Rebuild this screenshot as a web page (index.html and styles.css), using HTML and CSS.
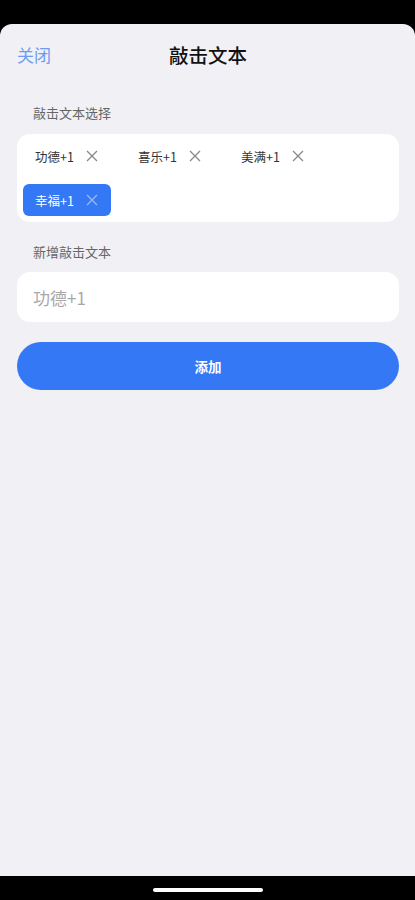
FILE: index.html
```html
<!DOCTYPE html>
<html lang="zh">
<head>
<meta charset="utf-8">
<link rel="stylesheet" href="styles.css">
</head>
<body>
<div class="screen">
  <div class="sheet">
    <header class="nav">
      <span class="close">关闭</span>
      <h1 class="title">敲击文本</h1>
    </header>
    <div class="label">敲击文本选择</div>
    <div class="card chips">
      <div class="chip"><span>功德+1</span><svg class="x" viewBox="0 0 12 12"><path d="M1 1L11 11M11 1L1 11"/></svg></div>
      <div class="chip"><span>喜乐+1</span><svg class="x" viewBox="0 0 12 12"><path d="M1 1L11 11M11 1L1 11"/></svg></div>
      <div class="chip"><span>美满+1</span><svg class="x" viewBox="0 0 12 12"><path d="M1 1L11 11M11 1L1 11"/></svg></div>
      <div class="chip active"><span>幸福+1</span><svg class="x" viewBox="0 0 12 12"><path d="M1 1L11 11M11 1L1 11"/></svg></div>
    </div>
    <div class="label label2">新增敲击文本</div>
    <div class="card input"><span class="placeholder">功德+1</span></div>
    <button class="add">添加</button>
  </div>
  <div class="home"><div class="bar"></div></div>
</div>
</body>
</html>
```
FILE: styles.css
```css
* { box-sizing: border-box; }
html, body { margin: 0; padding: 0; background: #000; }
body {
  font-family: "Noto Sans CJK SC", "Noto Sans", sans-serif;
  width: 415px;
  height: 900px;
  overflow: hidden;
}
.screen {
  height: 900px;
  display: flex;
  flex-direction: column;
  padding-top: 24px;
}
.sheet {
  flex: 1;
  background: #f1f0f5;
  border-radius: 12px 12px 0 0;
  padding: 0 16px 0 17px;
  display: flex;
  flex-direction: column;
}
.nav {
  height: 62px;
  display: flex;
  align-items: center;
  position: relative;
  padding-bottom: 1px;
}
.close {
  color: #6d9cf0;
  font-size: 17px;
  line-height: 20px;
}
.title {
  position: absolute;
  left: 0; right: 0;
  text-align: center;
  margin: 0;
  font-size: 19.5px;
  font-weight: 500;
  color: #111;
  line-height: 24px;
  pointer-events: none;
}
.label {
  color: #666;
  font-size: 13px;
  line-height: 18px;
  padding-left: 16px;
  margin-top: 18px;
  margin-bottom: 12px;
}
.label2 { margin-top: 21px; margin-bottom: 11px; }
.card {
  background: #fff;
  border-radius: 13px;
}
.chips {
  display: flex;
  flex-wrap: wrap;
  column-gap: 15px;
  row-gap: 12px;
  padding: 6px 6px 6px 6px;
}
.chip {
  width: 88px;
  height: 32px;
  border-radius: 6px;
  display: flex;
  align-items: center;
  padding-left: 12px;
  font-size: 12.5px;
  color: #333;
}
.chip span { width: 51px; }
.chip .x {
  width: 12px;
  height: 12px;
  fill: none;
  stroke: #888;
  stroke-width: 1.3;
}
.chip.active {
  background: #3478f6;
  color: #fff;
}
.chip.active .x { stroke: #9bb8e8; }
.input {
  height: 50px;
  display: flex;
  align-items: center;
  padding-left: 16px;
}
.placeholder {
  font-size: 17px;
  color: #a8a8a8;
}
.add {
  margin-top: 20px;
  height: 48px;
  border: none;
  border-radius: 24px;
  background: #3478f6;
  color: #fff;
  font-family: inherit;
  font-size: 13.5px;
  font-weight: 700;
}
.home {
  height: 24px;
  display: flex;
  justify-content: center;
  align-items: center;
  padding-top: 3px;
}
.bar {
  width: 110px;
  height: 4px;
  border-radius: 2px;
  background: #fff;
}
```
